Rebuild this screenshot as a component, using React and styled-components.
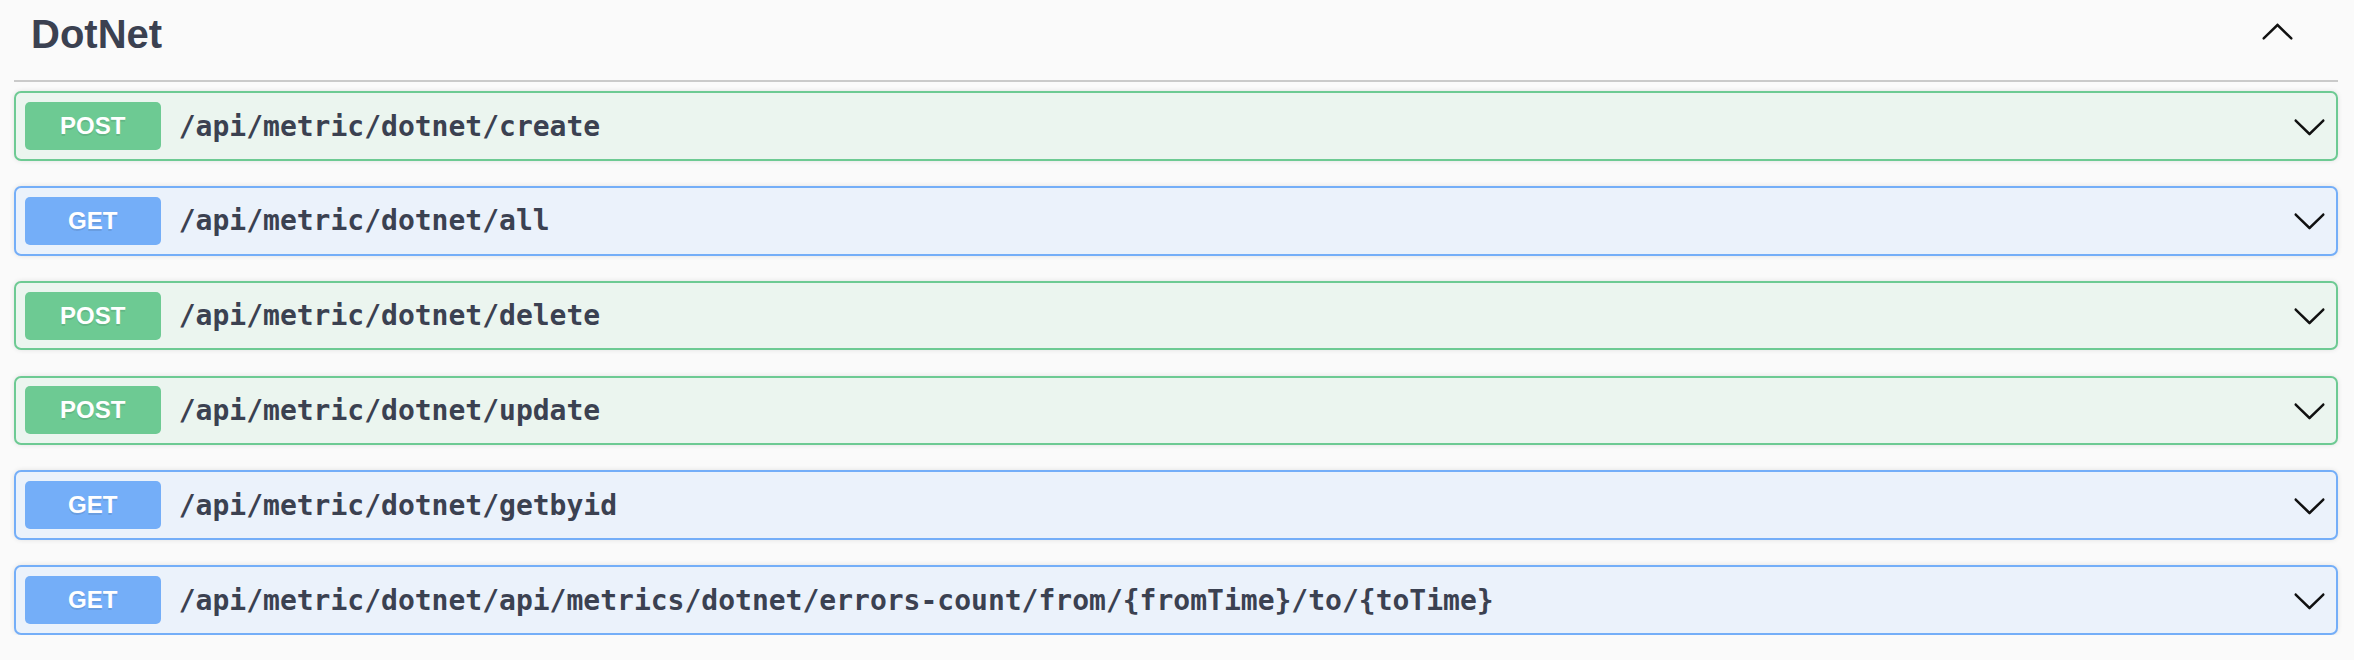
import React from 'react'
import styled, { createGlobalStyle } from 'styled-components'

const endpoints = [
  { method: 'POST', path: '/api/metric/dotnet/create' },
  { method: 'GET', path: '/api/metric/dotnet/all' },
  { method: 'POST', path: '/api/metric/dotnet/delete' },
  { method: 'POST', path: '/api/metric/dotnet/update' },
  { method: 'GET', path: '/api/metric/dotnet/getbyid' },
  { method: 'GET', path: '/api/metric/dotnet/api/metrics/dotnet/errors-count/from/{fromTime}/to/{toTime}' },
]

const colors = {
  POST: { main: '#6dca93', bg: '#ebf5ef' },
  GET: { main: '#74aef8', bg: '#ebf2fb' },
}

function Arrow({ up }) {
  return (
    <ArrowIcon viewBox="0 0 20 20" $up={up}>
      <path d="M17.418 6.109c.272-.268.709-.268.979 0s.271.701 0 .969l-7.908 7.83c-.27.268-.707.268-.979 0l-7.908-7.83c-.27-.268-.27-.701 0-.969.271-.268.709-.268.979 0L10 13.25l7.418-7.141z" />
    </ArrowIcon>
  )
}

export default function App() {
  return (
    <>
      <GlobalStyle />
      <Page>
        <TagHeader>
          <h3>DotNet</h3>
          <Arrow up />
        </TagHeader>
        <OpList>
          {endpoints.map((e) => (
            <OpBlock key={e.path} $method={e.method}>
              <Method $method={e.method}>{e.method}</Method>
              <Path>{e.path}</Path>
              <Arrow />
            </OpBlock>
          ))}
        </OpList>
      </Page>
    </>
  )
}

const GlobalStyle = createGlobalStyle`
  body{
    margin:0;
    background:#fafafa;
  }
`

const Page = styled.div`
  padding: 0 16px 0 14px;
`

const TagHeader = styled.div`
  display: flex;
  align-items: center;
  justify-content: space-between;
  box-sizing: border-box;
  height: 82px;
  padding: 0 43px 12px 17px;
  border-bottom: 2px solid #cacaca;
  h3{
    margin: 0;
    font-family: 'Liberation Sans', Arial, sans-serif;
    font-size: 40px;
    font-weight: 700;
    line-height: 1;
    color: #3b4151;
  }
  svg{
    margin-bottom: 3px;
  }
`

const OpList = styled.div`
  display: flex;
  flex-direction: column;
  gap: 25.3px;
  margin-top: 9.3px;
`

const OpBlock = styled.div`
  display: flex;
  align-items: center;
  padding: 8.75px;
  border: 2px solid ${(p) => colors[p.$method].main};
  border-radius: 7px;
  background: ${(p) => colors[p.$method].bg};
  box-shadow: 0 0 5px rgba(0, 0, 0, 0.1);
`

const Method = styled.div`
  display: flex;
  align-items: center;
  justify-content: center;
  flex-shrink: 0;
  width: 136px;
  height: 48px;
  border-radius: 5px;
  background: ${(p) => colors[p.$method].main};
  color: #fff;
  font-family: 'Liberation Sans', Arial, sans-serif;
  font-size: 24px;
  font-weight: 700;
  text-shadow: 0 2px 0 rgba(0, 0, 0, 0.1);
`

const Path = styled.div`
  flex: 1;
  margin-left: 18px;
  font-family: 'DejaVu Sans Mono', monospace;
  font-size: 28px;
  font-weight: 700;
  color: #3b4151;
  white-space: nowrap;
`

const ArrowIcon = styled.svg`
  width: 35px;
  height: 35px;
  flex-shrink: 0;
  fill: #111;
  transform: ${(p) => (p.$up ? 'rotate(180deg)' : 'none')};
`
